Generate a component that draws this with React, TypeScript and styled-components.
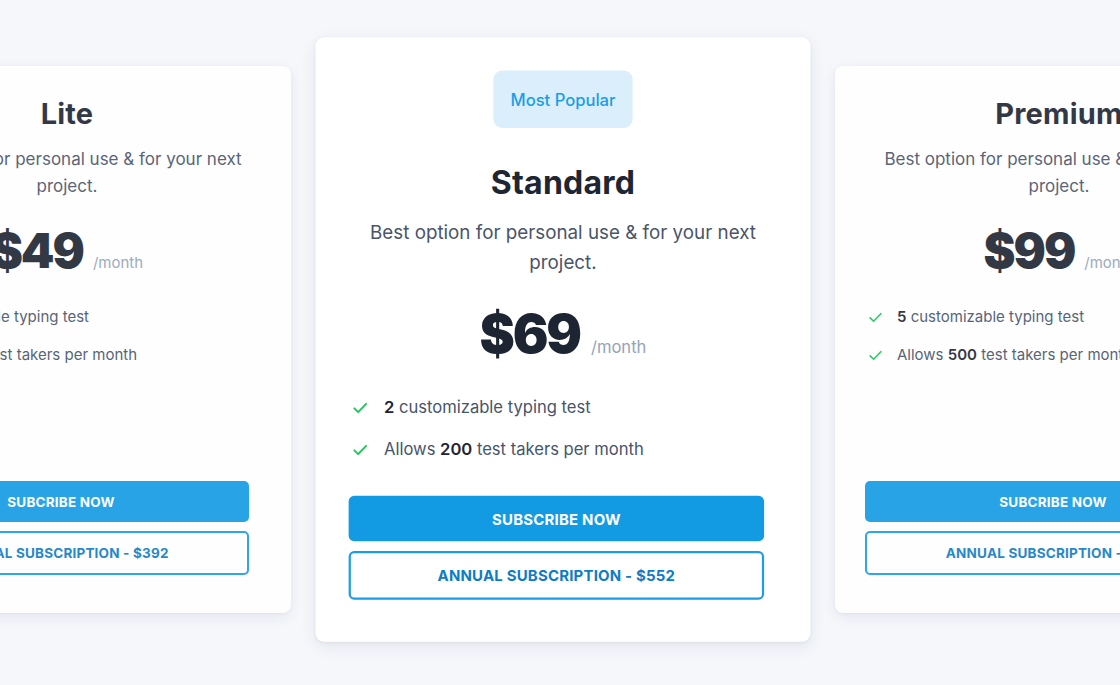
import React from "react";
import styled, { createGlobalStyle } from "styled-components";

const GlobalStyle = createGlobalStyle`
  html, body {
    margin: 0;
    padding: 0;
    background: #f5f7fb;
    overflow: hidden;
    font-family: Inter, "Noto Sans", sans-serif;
  }
  * { box-sizing: border-box; }
`;

const Page = styled.div`
  width: 1120px;
  height: 685px;
  overflow: hidden;
  display: flex;
  justify-content: center;
  align-items: flex-start;
  padding-top: 66px;
  padding-left: 6px;
`;

const Row = styled.div`
  display: flex;
  gap: 48px;
  align-items: stretch;
  flex-shrink: 0;
`;

const Card = styled.div<{ $featured?: boolean }>`
  width: 448px;
  min-height: 546px;
  flex-shrink: 0;
  background: #ffffff;
  border-radius: 8px;
  box-shadow: 0 4px 14px rgba(30, 41, 59, 0.08), 0 1px 3px rgba(30, 41, 59, 0.05);
  display: flex;
  flex-direction: column;
  align-items: center;
  padding: 30px 0 38px;
  opacity: ${(p) => (p.$featured ? 1 : 0.9)};
  transform: ${(p) => (p.$featured ? "scale(1.105)" : "none")};
  position: relative;
  z-index: ${(p) => (p.$featured ? 2 : 1)};
`;

const Badge = styled.div`
  height: 52px;
  padding: 0 16px;
  display: flex;
  align-items: center;
  background: #dbeefb;
  color: #179fe6;
  border-radius: 8px;
  font-size: 15px;
  font-weight: 500;
  margin-bottom: 32px;
`;

const Title = styled.h2`
  margin: 0;
  font-size: 29px;
  line-height: 36px;
  font-weight: 700;
  color: #1e2533;
  letter-spacing: 0.2px;
`;

const Desc = styled.p`
  margin: 14px 0 0;
  padding: 0 40px;
  text-align: center;
  font-size: 17px;
  line-height: 27px;
  color: #4a5568;
`;

const PriceRow = styled.div`
  margin-top: 27px;
  display: flex;
  align-items: baseline;
  gap: 10px;
`;

const Price = styled.span`
  font-size: 48px;
  line-height: 48px;
  font-weight: 900;
  color: #1e2532;
  letter-spacing: -2px;
`;

const Per = styled.span`
  font-size: 15px;
  color: #94a3b8;
`;

const Features = styled.ul`
  list-style: none;
  margin: 31px 0 31px;
  padding: 0 0 0 33px;
  align-self: stretch;
  display: flex;
  flex-direction: column;
  gap: 16px;
`;

const Feature = styled.li`
  display: flex;
  align-items: center;
  gap: 14px;
  font-size: 15px;
  line-height: 22px;
  color: #475569;

  b {
    color: #1e2533;
    font-weight: 600;
  }
`;

const Buttons = styled.div`
  margin-top: auto;
  align-self: stretch;
  padding: 0 42px 0 30px;
  display: flex;
  flex-direction: column;
  gap: 9px;
`;

const Primary = styled.button`
  height: 41px;
  border: none;
  border-radius: 5px;
  background: #129be3;
  color: #ffffff;
  font-family: Inter, "Noto Sans", sans-serif;
  font-size: 13.5px;
  font-weight: 700;
  letter-spacing: 0.2px;
  text-transform: uppercase;
  cursor: pointer;
`;

const Outline = styled.button`
  height: 44px;
  border: 2px solid #1b9de6;
  border-radius: 5px;
  background: #ffffff;
  color: #0f7cc2;
  font-family: Inter, "Noto Sans", sans-serif;
  font-size: 13.5px;
  font-weight: 700;
  letter-spacing: 0.2px;
  text-transform: uppercase;
  cursor: pointer;
`;

const Check = () => (
  <svg width="15" height="15" viewBox="0 0 24 24" fill="none" stroke="#22c55e" strokeWidth="2.8" strokeLinecap="round" strokeLinejoin="round">
    <polyline points="3.5 12.5 9 18 20.5 6" />
  </svg>
);

type Plan = {
  name: string;
  price: string;
  tests: string;
  takers: string;
  cta: string;
  annual: string;
  featured?: boolean;
};

const plans: Plan[] = [
  { name: "Lite", price: "$49", tests: "1", takers: "100", cta: "Subcribe now", annual: "Annual subscription - $392" },
  { name: "Standard", price: "$69", tests: "2", takers: "200", cta: "Subscribe now", annual: "Annual subscription - $552", featured: true },
  { name: "Premium", price: "$99", tests: "5", takers: "500", cta: "Subcribe now", annual: "Annual subscription - $792" },
];

export default function App() {
  return (
    <>
      <GlobalStyle />
      <Page>
        <Row>
          {plans.map((p) => (
            <Card key={p.name} $featured={p.featured}>
              {p.featured && <Badge>Most Popular</Badge>}
              <Title>{p.name}</Title>
              <Desc>Best option for personal use &amp; for your next project.</Desc>
              <PriceRow>
                <Price>{p.price}</Price>
                <Per>/month</Per>
              </PriceRow>
              <Features>
                <Feature>
                  <Check />
                  <span>
                    <b>{p.tests}</b> customizable typing test
                  </span>
                </Feature>
                <Feature>
                  <Check />
                  <span>
                    Allows <b>{p.takers}</b> test takers per month
                  </span>
                </Feature>
              </Features>
              <Buttons>
                <Primary>{p.cta}</Primary>
                <Outline>{p.annual}</Outline>
              </Buttons>
            </Card>
          ))}
        </Row>
      </Page>
    </>
  );
}
